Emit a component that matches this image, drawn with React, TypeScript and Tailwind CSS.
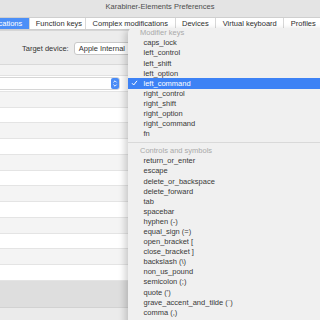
const tabs = ["Function keys", "Complex modifications", "Devices", "Virtual keyboard", "Profiles"];

const modifierKeys = [
  "caps_lock",
  "left_control",
  "left_shift",
  "left_option",
  "left_command",
  "right_control",
  "right_shift",
  "right_option",
  "right_command",
  "fn",
];

const controlKeys = [
  "return_or_enter",
  "escape",
  "delete_or_backspace",
  "delete_forward",
  "tab",
  "spacebar",
  "hyphen (-)",
  "equal_sign (=)",
  "open_bracket [",
  "close_bracket ]",
  "backslash (\\)",
  "non_us_pound",
  "semicolon (;)",
  "quote (')",
  "grave_accent_and_tilde (`)",
  "comma (,)",
];

const rows = Array.from({ length: 13 }, (_, i) => i);

function Stepper() {
  return (
    <div className="flex h-[11px] w-[8px] items-center justify-center rounded-[2px] bg-[#4a8cf6]">
      <svg width="8" height="11" viewBox="0 0 8 11" fill="none" stroke="white" strokeWidth="0.9">
        <path d="M2.4 4.4 L4 2.8 L5.6 4.4" />
        <path d="M2.4 6.6 L4 8.2 L5.6 6.6" />
      </svg>
    </div>
  );
}

function MenuItem({ label, checked }: { label: string; checked?: boolean }) {
  return (
    <div
      className={`relative flex h-[10.1px] items-center pl-[15.5px] leading-none ${
        checked ? "bg-[#3d82f5] text-white" : "text-[#383838]"
      }`}
    >
      {checked && (
        <svg className="absolute left-[3px] top-[2px]" width="7" height="6" viewBox="0 0 7 6" fill="none" stroke="white" strokeWidth="1">
          <path d="M1 3.2 L2.7 5 L6 0.8" />
        </svg>
      )}
      {label}
    </div>
  );
}

export default function App() {
  return (
    <div className="relative h-[320px] w-[320px] overflow-hidden bg-[#ececec] font-['Liberation_Sans',Arial,sans-serif] text-[7.5px] text-[#333]">
      {/* toolbar */}
      <div className="h-[31px] border-b border-[#d6d6d6] bg-[#e4e4e4]">
        <div className="h-[13px] text-center leading-[13px] text-[#4d4d4d]">Karabiner-Elements Preferences</div>
        <div className="mt-[4px] ml-[-54px] flex h-[13px] w-max rounded-[3px] border border-[#cfcfcf] bg-white">
          <div className="bg-[#4c8ff7] px-[6.5px] leading-[11px] text-white">Simple modifications</div>
          {tabs.map((t, i) => (
            <div
              key={t}
              className={`border-l border-[#d8d8d8] leading-[11px] text-[#2e2e2e] ${i === 0 ? "pl-[6px] pr-[3px]" : "px-[6.5px]"}`}
            >
              {t}
            </div>
          ))}
        </div>
      </div>

      {/* target device */}
      <div className="flex h-[33px] items-center gap-[5px] pl-[22px] pt-[2px]">
        <span>Target device:</span>
        <div className="flex h-[13px] w-[110px] items-center rounded-[3px] border border-[#c9c9c9] bg-white pl-[4px]">
          Apple Internal
        </div>
      </div>

      {/* table */}
      <div className="border-t border-[#d9d9d9]">
        <div className="h-[11px] border-b border-[#e2e2e2] bg-[#f3f3f3]" />
        {rows.map((i) => (
          <div
            key={i}
            className={`flex h-[15.77px] items-center border-b border-[#e4e4e4] ${i % 2 === 0 ? "bg-white" : "bg-[#f4f4f4]"}`}
          >
            {i === 0 && (
              <div className="ml-[-10px] flex h-[13px] w-[130px] items-center justify-end rounded-[3px] border border-[#d6d6d6] bg-white">
                <Stepper />
              </div>
            )}
          </div>
        ))}
        <div className="h-[27px] border-b border-[#d2d2d2] bg-[#dedede]" />
        <div className="h-[20px] bg-[#ebebeb]" />
      </div>

      {/* open popup menu */}
      <div className="absolute left-[128px] top-[28px] h-[300px] w-[200px] rounded-tl-[5px] bg-[#f0f0f0] shadow-[-3px_2px_7px_rgba(0,0,0,0.18)]">
        <div className="flex h-[10.1px] items-center pl-[12px] leading-none text-[#a9a9a9]">Modifier keys</div>
        {modifierKeys.map((k) => (
          <MenuItem key={k} label={k} checked={k === "left_command"} />
        ))}
        <div className="flex h-[6.9px] items-center">
          <div className="h-px w-full bg-[#d9d9d9]" />
        </div>
        <div className="flex h-[10.1px] items-center pl-[12px] leading-none text-[#a9a9a9]">Controls and symbols</div>
        {controlKeys.map((k) => (
          <MenuItem key={k} label={k} />
        ))}
      </div>
    </div>
  );
}
